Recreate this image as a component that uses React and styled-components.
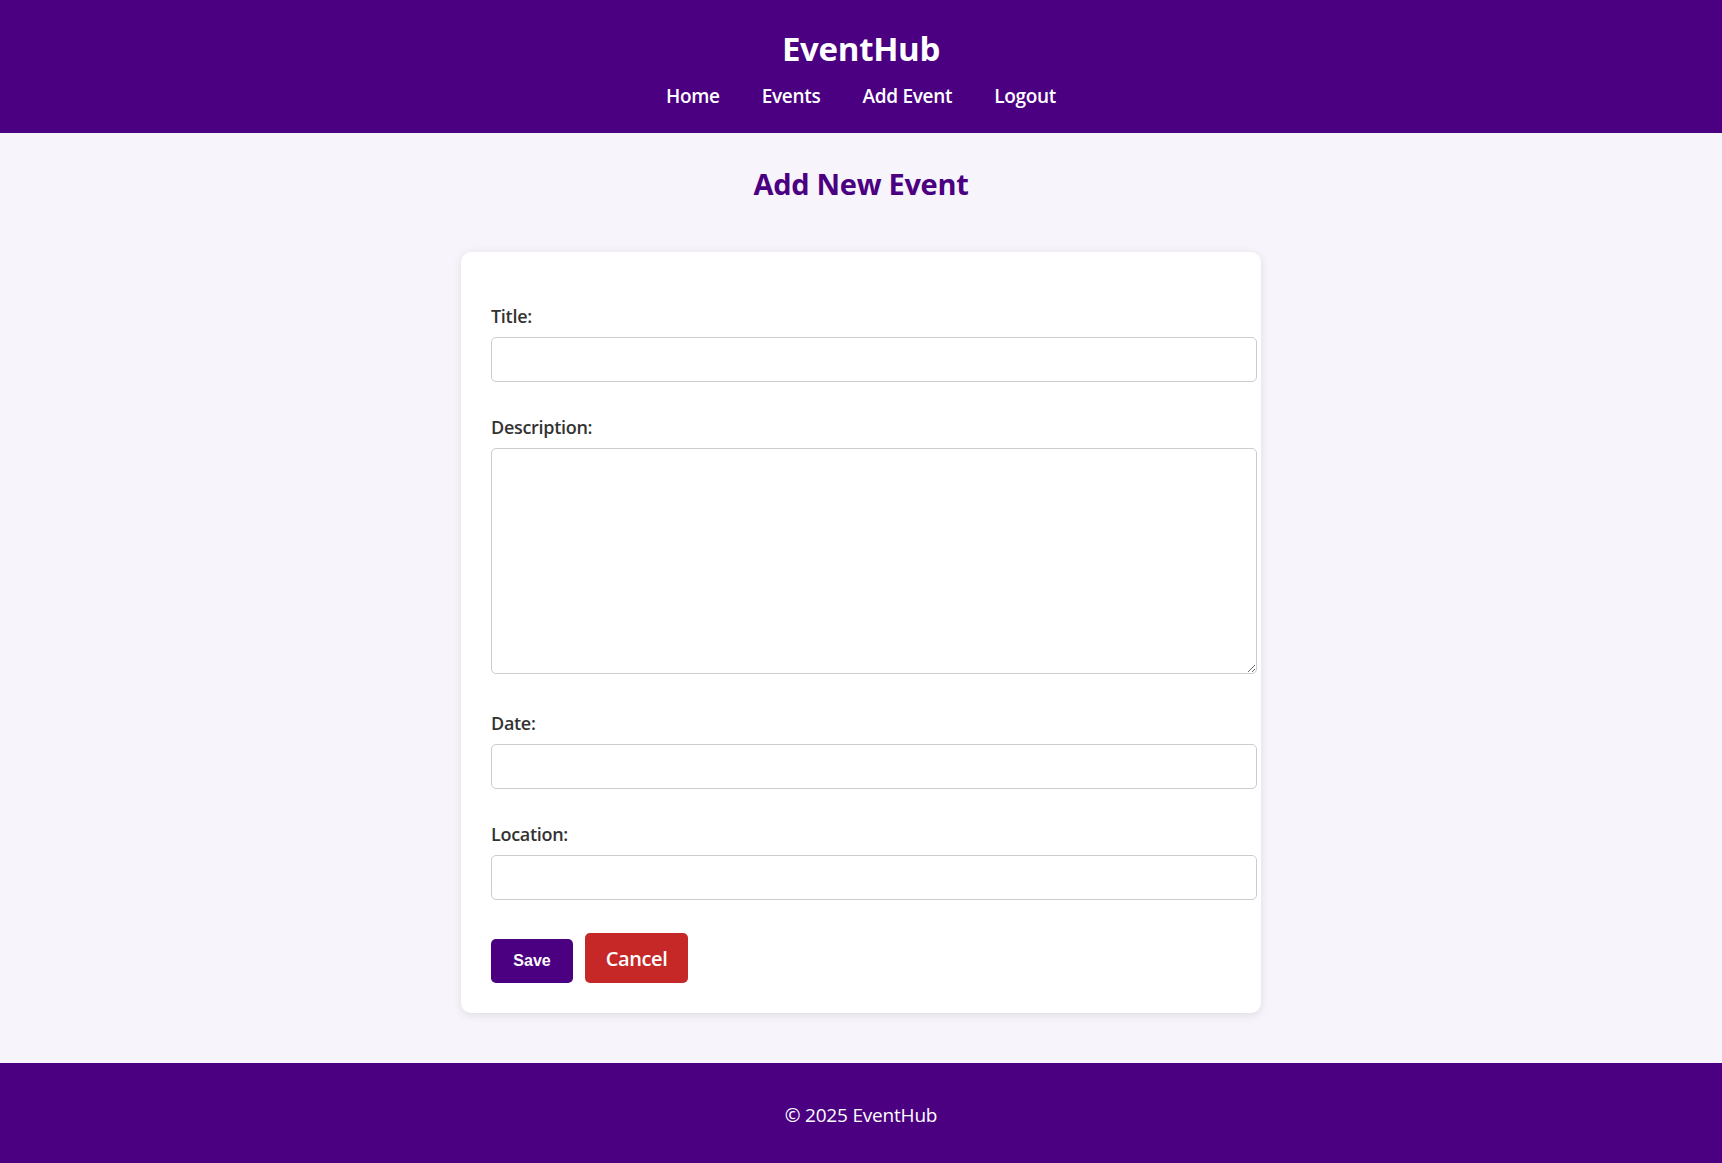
import React from 'react';
import styled, { createGlobalStyle } from 'styled-components';

const GlobalStyle = createGlobalStyle`
  html, body {
    margin: 0;
    padding: 0;
  }
  body {
    font-family: "Open Sans", "Noto Sans", sans-serif;
    background: #f7f4fb;
    color: #333;
  }
`;

const Page = styled.div`
  display: flex;
  flex-direction: column;
  min-height: 1163px;
`;

const Header = styled.header`
  background: #4b0082;
  color: #fff;
  text-align: center;
  padding: 30px 20px 25px;
`;

const Brand = styled.h1`
  margin: 0 0 16px;
  font-size: 33px;
  line-height: 38px;
  font-weight: 700;
  letter-spacing: -0.3px;
`;

const Nav = styled.nav`
  display: flex;
  justify-content: center;
  gap: 42px;
`;

const NavLink = styled.a`
  color: #fff;
  text-decoration: none;
  font-size: 19px;
  line-height: 24px;
  font-weight: 600;
  letter-spacing: -0.3px;
`;

const Main = styled.main`
  flex: 1;
  padding: 34px 20px 50px;
`;

const PageTitle = styled.h2`
  margin: 0 0 51px;
  text-align: center;
  color: #4b0082;
  font-size: 29px;
  line-height: 34px;
  font-weight: 700;
  letter-spacing: -0.3px;
`;

const Card = styled.div`
  width: 740px;
  margin: 0 auto;
  background: #fff;
  border-radius: 10px;
  box-shadow: 0 2px 10px rgba(0, 0, 0, 0.1);
  padding: 52px 30px 30px;
`;

const Group = styled.div`
  margin-bottom: ${p => (p.$tall ? '37px' : '33px')};
`;

const Label = styled.label`
  display: block;
  font-size: 18px;
  line-height: 24px;
  font-weight: 600;
  color: #333;
  margin-bottom: 9px;
  letter-spacing: -0.3px;
`;

const Input = styled.input`
  display: block;
  width: 100%;
  height: 21px;
  padding: 11px 12px;
  border: 1px solid #ccc;
  border-radius: 5px;
  font-family: inherit;
  font-size: 16px;
  background: #fff;
`;

const TextArea = styled.textarea`
  display: block;
  width: 100%;
  height: 202px;
  padding: 11px 12px;
  border: 1px solid #ccc;
  border-radius: 5px;
  font-family: inherit;
  font-size: 16px;
  resize: vertical;
`;

const Actions = styled.div`
  display: flex;
  align-items: flex-end;
  gap: 12px;
`;

const SaveButton = styled.button`
  box-sizing: border-box;
  background: #4b0082;
  color: #fff;
  border: none;
  border-radius: 5px;
  width: 82px;
  height: 44px;
  padding: 0;
  font-family: "Liberation Sans", Arial, sans-serif;
  font-size: 16px;
  font-weight: 700;
  cursor: pointer;
`;

const CancelButton = styled.a`
  display: flex;
  align-items: center;
  justify-content: center;
  background: #c62828;
  color: #fff;
  border-radius: 5px;
  width: 103px;
  height: 50px;
  font-size: 20px;
  font-weight: 600;
  text-decoration: none;
  letter-spacing: -0.4px;
`;

const Footer = styled.footer`
  background: #4b0082;
  color: #fff;
  text-align: center;
  height: 100px;
  display: flex;
  align-items: center;
  justify-content: center;
  padding-top: 4px;
  box-sizing: border-box;
  font-size: 19px;
  letter-spacing: -0.2px;
`;

const fields = [
  { id: 'title', label: 'Title:' },
  { id: 'description', label: 'Description:', multiline: true },
  { id: 'date', label: 'Date:' },
  { id: 'location', label: 'Location:' },
];

const App = () => (
  <Page>
    <GlobalStyle />
    <Header>
      <Brand>EventHub</Brand>
      <Nav>
        <NavLink href="#">Home</NavLink>
        <NavLink href="#">Events</NavLink>
        <NavLink href="#">Add Event</NavLink>
        <NavLink href="#">Logout</NavLink>
      </Nav>
    </Header>
    <Main>
      <PageTitle>Add New Event</PageTitle>
      <Card>
        <form onSubmit={e => e.preventDefault()}>
          {fields.map(f => (
            <Group key={f.id} $tall={f.multiline}>
              <Label htmlFor={f.id}>{f.label}</Label>
              {f.multiline ? <TextArea id={f.id} /> : <Input id={f.id} type="text" />}
            </Group>
          ))}
          <Actions>
            <SaveButton type="submit">Save</SaveButton>
            <CancelButton href="#">Cancel</CancelButton>
          </Actions>
        </form>
      </Card>
    </Main>
    <Footer>© 2025 EventHub</Footer>
  </Page>
);

export default App;
